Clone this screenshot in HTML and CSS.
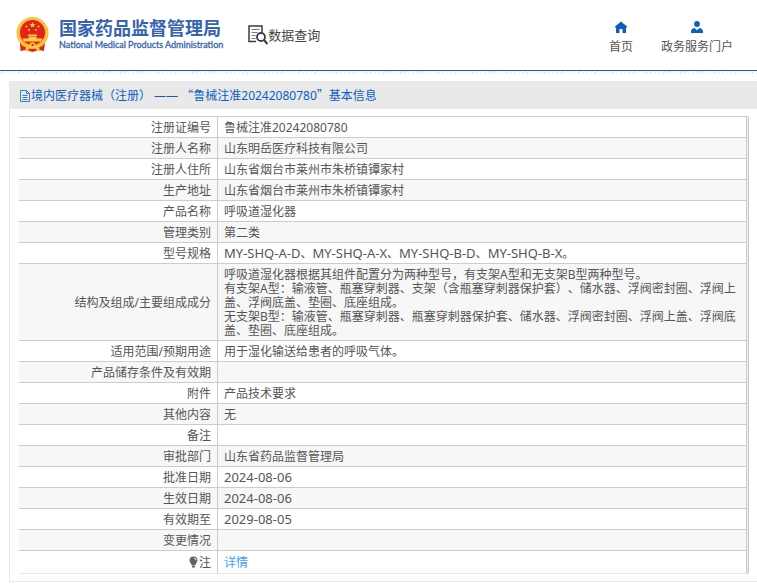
FILE: index.html
```html
<!DOCTYPE html>
<html lang="zh-CN">
<head>
<meta charset="utf-8">
<title>数据查询</title>
<link rel="stylesheet" href="styles.css">
</head>
<body>
<header class="header">
  <div class="brand">
    <svg class="emblem" viewBox="0 0 33 36" aria-hidden="true">
      <path d="M4 25L4.500 34L10 33L16.500 35L23 33L28 34L29 25Z" fill="#dc251b"/>
      <circle cx="16.500" cy="16" r="16" fill="#f2b632"/>
      <circle cx="16.500" cy="16" r="14.500" fill="none" stroke="#fad45c" stroke-width="1.500" stroke-dasharray="2 1"/>
      <circle cx="16.500" cy="15.500" r="12.500" fill="#e2231a"/>
      <path d="M16.500 5l.8 2 2.200.1-1.700 1.400.6 2.100-1.900-1.200-1.900 1.200.6-2.100-1.700-1.400 2.200-.1z" fill="#f9cf45"/>
      <g fill="#f9cf45"><circle cx="10.500" cy="9.500" r="1"/><circle cx="22.500" cy="9.500" r="1"/><circle cx="13" cy="13" r="1"/><circle cx="20" cy="13" r="1"/>
      <path d="M12.500 17.500h8l1 1.500h-10zM12.500 19.500h8v2h-8zM6.500 21.500h20l-1.500 3h-17z"/></g>
      <path d="M5 25.500q5 4 11.500 1.500Q23 29.500 28 25.500L26.500 29q-5 1.500-10-.5-5 2-10 .5z" fill="#f6c13a"/>
      <circle cx="16.500" cy="28" r="2.800" fill="#f9cf45"/><circle cx="16.500" cy="28" r="1.200" fill="#e2231a"/>
      <path d="M10 30l3.500 1L12 34H9zM23 30l-3.500 1L21 34h3z" fill="#f6c13a"/>
    </svg>
    <div class="brand-text">
      <span class="brand-cn">国家药品监督管理局</span>
      <span class="brand-en">National Medical Products Administration</span>
    </div>
  </div>
  <div class="section">
    <svg class="section-icon" viewBox="0 0 20 20" aria-hidden="true" fill="none" stroke="#3b3b4b">
      <path d="M8 16.500H1V1h13v6" stroke-width="1.500"/>
      <path d="M3.500 4.500h8M3.500 7.500h6M3.500 10.500h4M3.500 13.500h4" stroke="#77778a"/>
      <circle cx="13" cy="12" r="4" stroke-width="1.800"/><path d="M16 15l3.500 4" stroke-width="2.200"/>
    </svg>
    <span>数据查询</span>
  </div>
  <nav class="nav">
    <a href="#">
      <svg viewBox="0 0 12 12" aria-hidden="true"><path d="M6 .5L12 5.500V6.500H11V12H7.500V8h-3v4H1V6.500H0V5.500z" fill="#0a5fc4"/></svg>
      <span>首页</span>
    </a>
    <a href="#">
      <svg viewBox="0 0 12 12" aria-hidden="true"><circle cx="6" cy="3" r="2.900" fill="#0a5fc4"/><path d="M0 12V10.500Q0 7.500 3.500 7L6 9.200 8.500 7Q12 7.500 12 10.500V12z" fill="#0a5fc4"/></svg>
      <span>政务服务门户</span>
    </a>
  </nav>
</header>
<div class="stripe"></div>
<main class="panel">
  <h1 class="panel-title">
    <svg viewBox="0 0 10 12" aria-hidden="true" fill="none" stroke="#3b7acb"><path d="M.5.500h6l3 3v8h-9zM6.500.500v3h3M2.500 5.500h5M2.500 7.500h5M2.500 9.500h5"/></svg>
    <span>境内医疗器械（注册） —— <span class="wide">“</span>鲁械注准20242080780<span class="wide">”</span>基本信息</span>
  </h1>
  <div class="table-frame">
    <table class="info">
      <tbody>
        <tr><th scope="row">注册证编号</th><td>鲁械注准20242080780</td></tr>
        <tr><th scope="row">注册人名称</th><td>山东明岳医疗科技有限公司</td></tr>
        <tr><th scope="row">注册人住所</th><td>山东省烟台市莱州市朱桥镇镡家村</td></tr>
        <tr><th scope="row">生产地址</th><td>山东省烟台市莱州市朱桥镇镡家村</td></tr>
        <tr><th scope="row">产品名称</th><td>呼吸道湿化器</td></tr>
        <tr><th scope="row">管理类别</th><td>第二类</td></tr>
        <tr><th scope="row">型号规格</th><td><span class="code">MY-SHQ-A-D</span>、<span class="code">MY-SHQ-A-X</span>、<span class="code">MY-SHQ-B-D</span>、<span class="code">MY-SHQ-B-X</span>。</td></tr>
        <tr><th scope="row">结构及组成/主要组成成分</th><td>呼吸道湿化器根据其组件配置分为两种型号，有支架A型和无支架B型两种型号。<br>有支架A型：输液管、瓶塞穿刺器、支架（含瓶塞穿刺器保护套）、储水器、浮阀密封圈、浮阀上盖、浮阀底盖、垫圈、底座组成。<br>无支架B型：输液管、瓶塞穿刺器、瓶塞穿刺器保护套、储水器、浮阀密封圈、浮阀上盖、浮阀底盖、垫圈、底座组成。</td></tr>
        <tr><th scope="row">适用范围/预期用途</th><td>用于湿化输送给患者的呼吸气体。</td></tr>
        <tr><th scope="row">产品储存条件及有效期</th><td></td></tr>
        <tr><th scope="row">附件</th><td>产品技术要求</td></tr>
        <tr><th scope="row">其他内容</th><td>无</td></tr>
        <tr><th scope="row">备注</th><td></td></tr>
        <tr><th scope="row">审批部门</th><td>山东省药品监督管理局</td></tr>
        <tr><th scope="row">批准日期</th><td><span class="code">2024-08-06</span></td></tr>
        <tr><th scope="row">生效日期</th><td><span class="code">2024-08-06</span></td></tr>
        <tr><th scope="row">有效期至</th><td><span class="code">2029-08-05</span></td></tr>
        <tr><th scope="row">变更情况</th><td></td></tr>
        <tr class="note"><th scope="row"><svg viewBox="0 0 9 12" aria-hidden="true"><path d="M4.500.500a4 4 0 0 1 4 4c0 2-2 3-2.300 5H2.800C2.500 7.500.5 6.500.5 4.500a4 4 0 0 1 4-4zM3 10h3v1.500H3z" fill="#606266"/><path d="M5 2q2 .3 2 2.300" fill="none" stroke="#fff"/></svg>注</th><td><a href="#">详情</a></td></tr>
      </tbody>
    </table>
  </div>
</main>
</body>
</html>
```
FILE: styles.css
```css
* { box-sizing: border-box; }
body {
  margin: 0;
  background: #fff;
  color: #555;
  font: 12px/14px "Noto Sans", "Noto Sans CJK SC", sans-serif;
  text-spacing-trim: space-all;
}
a { color: inherit; text-decoration: none; }
.header {
  display: flex;
  align-items: center;
  height: 71px;
  padding: 0 24px 0 16px;
  border-bottom: 1px solid #0a5fc4;
}
.brand { display: flex; align-items: center; gap: 10px; }
.emblem { width: 33px; height: 36px; }
.brand-text { display: flex; flex-direction: column; color: #3563b1; white-space: nowrap; }
.brand-cn { font: bold 18px/20px "Noto Sans CJK SC", sans-serif; }
.brand-en { font: 9px/16px Lato, sans-serif; -webkit-text-stroke: 0.3px; }
.section {
  display: flex;
  align-items: center;
  margin-left: 25px;
  color: #444;
  font-size: 13px;
}
.section-icon { width: 20px; height: 20px; }
.nav { display: flex; gap: 28px; margin-left: auto; padding-top: 4px; }
.nav a { display: flex; flex-direction: column; align-items: center; gap: 7px; }
.nav svg { width: 12px; height: 12px; }
.stripe {
  height: 3px;
  background: repeating-linear-gradient(135deg, #fff 0 2px, #eee6ec 2px 3px);
}
.panel {
  margin: 7px 0 5px 9px;
  padding-bottom: 7px;
  border: 1px solid #e6e6eb;
  border-width: 0 0 1px 1px;
}
.panel-title {
  display: flex;
  align-items: center;
  gap: 1px;
  height: 28px;
  margin: 0 0 7px -1px;
  padding: 2px 0 0 11px;
  border-bottom: 1px solid #ebebf2;
  background: #e9e9e9;
  color: #0a5fc4;
  font-size: 12px;
  font-weight: 400;
}
.panel-title svg { width: 10px; height: 12px; }
.wide { font-family: "Noto Sans CJK SC", sans-serif; }
.table-frame {
  margin: 0 8px 0 9px;
  padding-right: 1px;
  border-right: 1px solid #ccc;
  background: #ebebf2;
}
.info {
  width: 100%;
  border-spacing: 0;
  table-layout: fixed;
  background: #fff;
}
.info th, .info td {
  height: 21px;
  padding: 4px 6px 2px;
  border: 1px solid #ccc;
  border-width: 1px 1px 0 0;
  font-weight: 400;
  vertical-align: middle;
}
.info th { width: 199px; text-align: right; }
.info td { text-align: left; }
.info tr:nth-child(even) { background: #f7f7f7; }
.info .note th, .info .note td { height: 24px; border-bottom: 1px solid #e6e6eb; }
.code { font-size: 13px; line-height: 12px; }
.note svg { width: 9px; height: 12px; margin-right: 1px; vertical-align: -1px; }
.note a { color: #409eff; }
```
